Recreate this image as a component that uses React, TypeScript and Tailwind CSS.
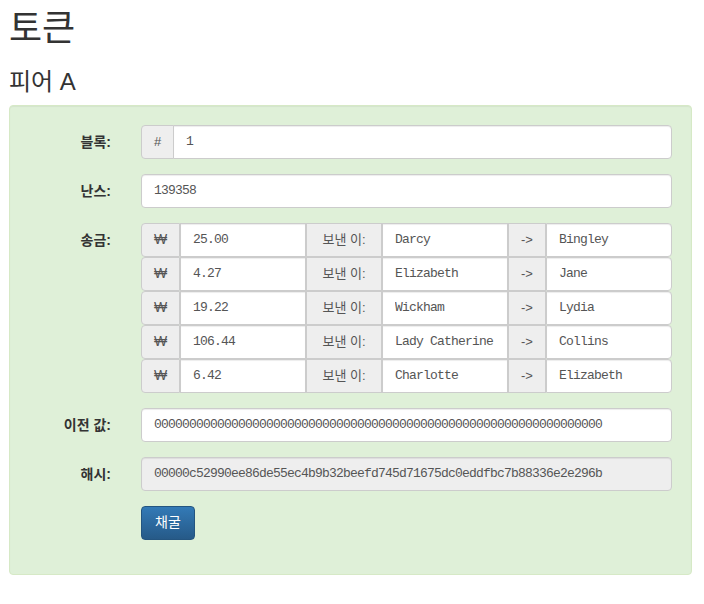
import React from "react";

const sans = "font-['Liberation_Sans','Noto_Sans_CJK_KR',sans-serif]";
const mono = "font-['Liberation_Mono','Noto_Sans_CJK_KR',monospace]";

const txs = [
  ["25.00", "Darcy", "Bingley"],
  ["4.27", "Elizabeth", "Jane"],
  ["19.22", "Wickham", "Lydia"],
  ["106.44", "Lady Catherine", "Collins"],
  ["6.42", "Charlotte", "Elizabeth"],
];

function Addon({ children, className = "" }: { children: React.ReactNode; className?: string }) {
  return (
    <span
      className={`flex h-[34px] shrink-0 items-center justify-center border border-[#ccc] bg-[#eee] text-[#555] ${className}`}
    >
      {children}
    </span>
  );
}

function Field({ value, className = "", disabled = false }: { value: string; className?: string; disabled?: boolean }) {
  return (
    <input
      readOnly
      disabled={disabled}
      defaultValue={value}
      className={`h-[34px] w-full min-w-0 border border-[#ccc] px-3 text-[13px] tracking-[-0.8px] text-[#555] shadow-[inset_0_1px_1px_rgba(0,0,0,0.075)] outline-none ${mono} ${
        disabled ? "bg-[#eee]" : "bg-white"
      } ${className}`}
    />
  );
}

function Row({ label, children }: { label: string; children: React.ReactNode }) {
  return (
    <div className="mb-[15px] flex gap-[30px]">
      <label className="w-[82px] shrink-0 pt-[7px] text-right text-[14px] font-bold leading-5 text-[#333]">
        {label}
      </label>
      <div className="min-w-0 flex-1">{children}</div>
    </div>
  );
}

export default function App() {
  return (
    <div className={`${sans} ml-[9px] w-[683px] text-[#333]`}>
      <h1 className="pt-[9px] text-[36px] font-normal leading-[1.1]">토큰</h1>
      <h3 className="mb-[10px] mt-[20px] text-[24px] font-normal leading-[1.1]">피어 A</h3>

      <div className="rounded border border-[#d6e9c6] bg-[#dff0d8] p-[19px] shadow-[inset_0_1px_1px_rgba(0,0,0,0.05)]">
        <Row label="블록:">
          <div className="flex">
            <Addon className="w-[33px] rounded-l text-[13px]">#</Addon>
            <Field value="1" className="-ml-px rounded-r" />
          </div>
        </Row>

        <Row label="난스:">
          <Field value="139358" className="rounded" />
        </Row>

        <Row label="송금:">
          {txs.map(([amt, from, to]) => (
            <div key={from + to} className="flex">
              <Addon className="w-[39px] rounded-l text-[14px]">₩</Addon>
              <Field value={amt} />
              <Addon className="w-[76px] text-[13px]">보낸 이:</Addon>
              <Field value={from} />
              <Addon className="w-[38px] text-[13px]">-&gt;</Addon>
              <Field value={to} className="rounded-r" />
            </div>
          ))}
        </Row>

        <Row label="이전 값:">
          <Field value={"0".repeat(64)} className="rounded" />
        </Row>

        <Row label="해시:">
          <Field
            value="00000c52990ee86de55ec4b9b32beefd745d71675dc0eddfbc7b88336e2e296b"
            className="rounded"
            disabled
          />
        </Row>

        <Row label="">
          <button className="h-[34px] w-[54px] rounded border border-[#245580] bg-gradient-to-b from-[#337ab7] to-[#265a88] text-[14px] text-white">
            채굴
          </button>
        </Row>
      </div>
    </div>
  );
}
